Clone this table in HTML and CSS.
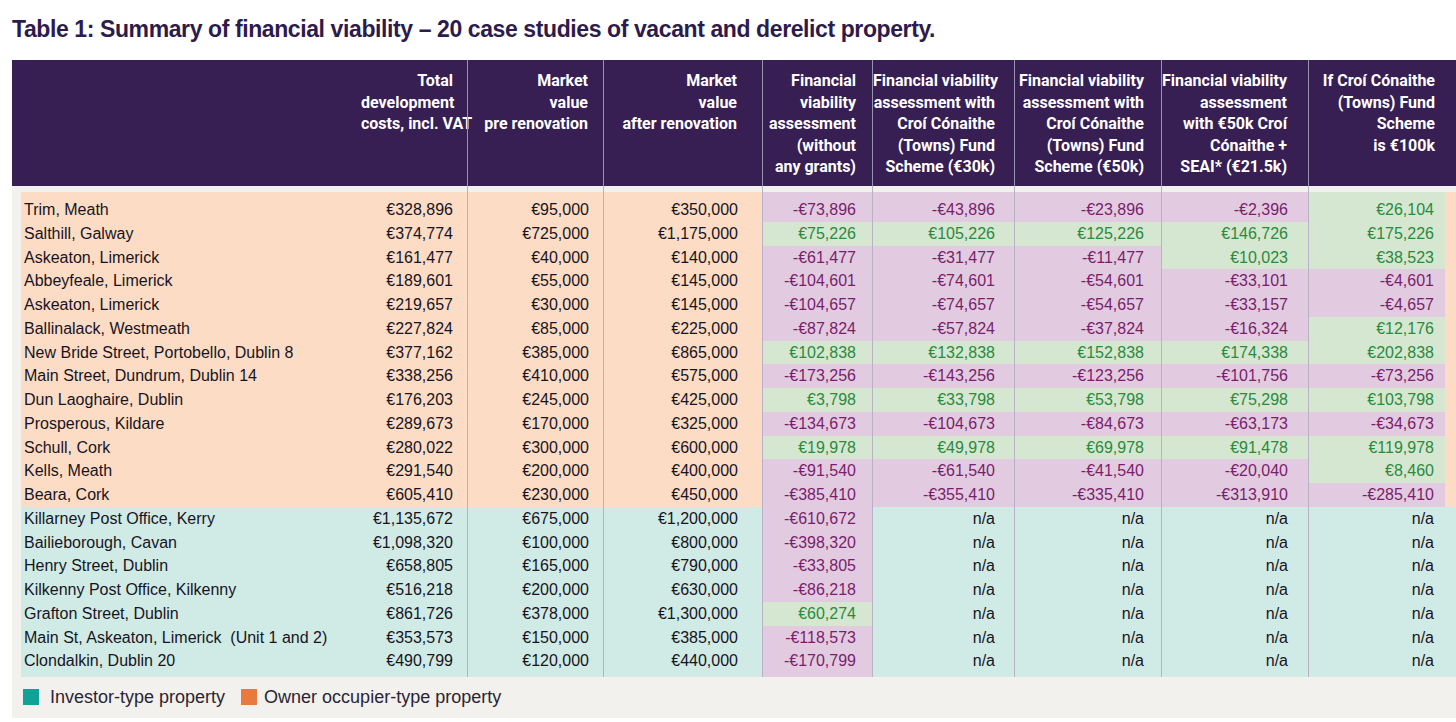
FILE: index.html
```html
<!DOCTYPE html>
<html lang="en">
<head>
<meta charset="utf-8">
<title>Table 1: Summary of financial viability</title>
<link rel="stylesheet" href="styles.css">
</head>
<body>
<h1 class="title">Table 1: Summary of financial viability – 20 case studies of vacant and derelict property.</h1>
<div class="panel">
  <div class="thead">
    <div class="th"></div>
    <div class="th">Total<br>development<br>costs, incl. VAT</div>
    <div class="th">Market<br>value<br>pre renovation</div>
    <div class="th">Market<br>value<br>after renovation</div>
    <div class="th">Financial<br>viability<br>assessment<br>(without<br>any grants)</div>
    <div class="th">Financial viability<br>assessment with<br>Croí Cónaithe<br>(Towns) Fund<br>Scheme (€30k)</div>
    <div class="th">Financial viability<br>assessment with<br>Croí Cónaithe<br>(Towns) Fund<br>Scheme (€50k)</div>
    <div class="th">Financial viability<br>assessment<br>with €50k Croí<br>Cónaithe +<br>SEAI* (€21.5k)</div>
    <div class="th">If Croí Cónaithe<br>(Towns) Fund<br>Scheme<br>is €100k</div>
  </div>
  <div class="tbody">
    <div class="spacer"><div></div><div></div><div></div><div></div><div></div><div></div><div></div><div></div><div></div></div>
    <div class="row own first"><div class="c lbl">Trim, Meath</div><div class="c">€328,896</div><div class="c">€95,000</div><div class="c">€350,000</div><div class="c neg">-€73,896</div><div class="c neg">-€43,896</div><div class="c neg">-€23,896</div><div class="c neg">-€2,396</div><div class="c pos">€26,104</div></div>
    <div class="row own"><div class="c lbl">Salthill, Galway</div><div class="c">€374,774</div><div class="c">€725,000</div><div class="c">€1,175,000</div><div class="c pos">€75,226</div><div class="c pos">€105,226</div><div class="c pos">€125,226</div><div class="c pos">€146,726</div><div class="c pos">€175,226</div></div>
    <div class="row own"><div class="c lbl">Askeaton, Limerick</div><div class="c">€161,477</div><div class="c">€40,000</div><div class="c">€140,000</div><div class="c neg">-€61,477</div><div class="c neg">-€31,477</div><div class="c neg">-€11,477</div><div class="c pos">€10,023</div><div class="c pos">€38,523</div></div>
    <div class="row own"><div class="c lbl">Abbeyfeale, Limerick</div><div class="c">€189,601</div><div class="c">€55,000</div><div class="c">€145,000</div><div class="c neg">-€104,601</div><div class="c neg">-€74,601</div><div class="c neg">-€54,601</div><div class="c neg">-€33,101</div><div class="c neg">-€4,601</div></div>
    <div class="row own"><div class="c lbl">Askeaton, Limerick</div><div class="c">€219,657</div><div class="c">€30,000</div><div class="c">€145,000</div><div class="c neg">-€104,657</div><div class="c neg">-€74,657</div><div class="c neg">-€54,657</div><div class="c neg">-€33,157</div><div class="c neg">-€4,657</div></div>
    <div class="row own"><div class="c lbl">Ballinalack, Westmeath</div><div class="c">€227,824</div><div class="c">€85,000</div><div class="c">€225,000</div><div class="c neg">-€87,824</div><div class="c neg">-€57,824</div><div class="c neg">-€37,824</div><div class="c neg">-€16,324</div><div class="c pos">€12,176</div></div>
    <div class="row own"><div class="c lbl">New Bride Street, Portobello, Dublin 8</div><div class="c">€377,162</div><div class="c">€385,000</div><div class="c">€865,000</div><div class="c pos">€102,838</div><div class="c pos">€132,838</div><div class="c pos">€152,838</div><div class="c pos">€174,338</div><div class="c pos">€202,838</div></div>
    <div class="row own"><div class="c lbl">Main Street, Dundrum, Dublin 14</div><div class="c">€338,256</div><div class="c">€410,000</div><div class="c">€575,000</div><div class="c neg">-€173,256</div><div class="c neg">-€143,256</div><div class="c neg">-€123,256</div><div class="c neg">-€101,756</div><div class="c neg">-€73,256</div></div>
    <div class="row own"><div class="c lbl">Dun Laoghaire, Dublin</div><div class="c">€176,203</div><div class="c">€245,000</div><div class="c">€425,000</div><div class="c pos">€3,798</div><div class="c pos">€33,798</div><div class="c pos">€53,798</div><div class="c pos">€75,298</div><div class="c pos">€103,798</div></div>
    <div class="row own"><div class="c lbl">Prosperous, Kildare</div><div class="c">€289,673</div><div class="c">€170,000</div><div class="c">€325,000</div><div class="c neg">-€134,673</div><div class="c neg">-€104,673</div><div class="c neg">-€84,673</div><div class="c neg">-€63,173</div><div class="c neg">-€34,673</div></div>
    <div class="row own"><div class="c lbl">Schull, Cork</div><div class="c">€280,022</div><div class="c">€300,000</div><div class="c">€600,000</div><div class="c pos">€19,978</div><div class="c pos">€49,978</div><div class="c pos">€69,978</div><div class="c pos">€91,478</div><div class="c pos">€119,978</div></div>
    <div class="row own"><div class="c lbl">Kells, Meath</div><div class="c">€291,540</div><div class="c">€200,000</div><div class="c">€400,000</div><div class="c neg">-€91,540</div><div class="c neg">-€61,540</div><div class="c neg">-€41,540</div><div class="c neg">-€20,040</div><div class="c pos">€8,460</div></div>
    <div class="row own"><div class="c lbl">Beara, Cork</div><div class="c">€605,410</div><div class="c">€230,000</div><div class="c">€450,000</div><div class="c neg">-€385,410</div><div class="c neg">-€355,410</div><div class="c neg">-€335,410</div><div class="c neg">-€313,910</div><div class="c neg">-€285,410</div></div>
    <div class="row inv"><div class="c lbl">Killarney Post Office, Kerry</div><div class="c">€1,135,672</div><div class="c">€675,000</div><div class="c">€1,200,000</div><div class="c neg">-€610,672</div><div class="c">n/a</div><div class="c">n/a</div><div class="c">n/a</div><div class="c">n/a</div></div>
    <div class="row inv"><div class="c lbl">Bailieborough, Cavan</div><div class="c">€1,098,320</div><div class="c">€100,000</div><div class="c">€800,000</div><div class="c neg">-€398,320</div><div class="c">n/a</div><div class="c">n/a</div><div class="c">n/a</div><div class="c">n/a</div></div>
    <div class="row inv"><div class="c lbl">Henry Street, Dublin</div><div class="c">€658,805</div><div class="c">€165,000</div><div class="c">€790,000</div><div class="c neg">-€33,805</div><div class="c">n/a</div><div class="c">n/a</div><div class="c">n/a</div><div class="c">n/a</div></div>
    <div class="row inv"><div class="c lbl">Kilkenny Post Office, Kilkenny</div><div class="c">€516,218</div><div class="c">€200,000</div><div class="c">€630,000</div><div class="c neg">-€86,218</div><div class="c">n/a</div><div class="c">n/a</div><div class="c">n/a</div><div class="c">n/a</div></div>
    <div class="row inv"><div class="c lbl">Grafton Street, Dublin</div><div class="c">€861,726</div><div class="c">€378,000</div><div class="c">€1,300,000</div><div class="c pos">€60,274</div><div class="c">n/a</div><div class="c">n/a</div><div class="c">n/a</div><div class="c">n/a</div></div>
    <div class="row inv"><div class="c lbl">Main St, Askeaton, Limerick&nbsp; (Unit 1 and 2)</div><div class="c">€353,573</div><div class="c">€150,000</div><div class="c">€385,000</div><div class="c neg">-€118,573</div><div class="c">n/a</div><div class="c">n/a</div><div class="c">n/a</div><div class="c">n/a</div></div>
    <div class="row inv last"><div class="c lbl">Clondalkin, Dublin 20</div><div class="c">€490,799</div><div class="c">€120,000</div><div class="c">€440,000</div><div class="c neg">-€170,799</div><div class="c">n/a</div><div class="c">n/a</div><div class="c">n/a</div><div class="c">n/a</div></div>
  </div>
  <div class="legend">
    <span class="sw sw-inv"></span><span class="lg-text lg-first">Investor-type property</span>
    <span class="sw sw-own"></span><span class="lg-text lg-second">Owner occupier-type property</span>
  </div>
</div>
</body>
</html>
```

FILE: styles.css
```css
* { box-sizing: border-box; }

body {
  margin: 0;
  background: #ffffff;
  font-family: "Liberation Sans", Arial, sans-serif;
  color: #17141f;
}

.title {
  margin: 14px 0 0 12px;
  font-size: 23px;
  line-height: 30px;
  font-weight: bold;
  letter-spacing: -0.4px;
  color: #2d1b4b;
  white-space: nowrap;
}

.panel {
  margin: 16px 0 0 12px;
  width: 1444px;
  height: 658px;
  background: #f2f1ed;
}

.thead {
  display: grid;
  grid-template-columns: 349px 106px 136px 159px 110px 142px 147px 147px 148px;
  height: 126px;
  background: #371e53;
  color: #ffffff;
  font-family: "Roboto", "Liberation Sans", sans-serif;
  font-weight: 700;
  font-size: 16px;
  line-height: 21.5px;
}

.th {
  padding-top: 10px;
  text-align: right;
  white-space: nowrap;
}

.th:nth-child(n+3) { border-left: 1px solid #9b92ae; }

.th:nth-child(2) { padding-right: 14px; }
.th:nth-child(3) { padding-right: 15px; }
.th:nth-child(4) { padding-right: 25px; }
.th:nth-child(5) { padding-right: 16px; }
.th:nth-child(6) { padding-right: 19px; }
.th:nth-child(7) { padding-right: 17px; }
.th:nth-child(8) { padding-right: 21px; }
.th:nth-child(9) { padding-right: 21px; }

.tbody {
  padding-left: 9px;
}

.row,
.spacer {
  display: grid;
  grid-template-columns: 340px 106px 136px 159px 110px 142px 147px 147px 137px;
}

.spacer { height: 6px; }
.spacer > div:nth-child(n+3) { border-left: 1px solid #b9b2c4; }

.row.own { background: #fcdcc5; }
.row.inv { background: #d0ebe5; }

.c {
  line-height: 23.75px;
  font-size: 16px;
  text-align: right;
  white-space: nowrap;
  color: #17141f;
}

.c:nth-child(n+3) { border-left: 1px solid #b9b2c4; }

.c.lbl { text-align: left; padding-left: 3px; }

.c:nth-child(2) { padding-right: 14px; }
.c:nth-child(3) { padding-right: 14px; }
.c:nth-child(4) { padding-right: 24px; }
.c:nth-child(5) { padding-right: 16px; }
.c:nth-child(6) { padding-right: 19px; }
.c:nth-child(7) { padding-right: 17px; }
.c:nth-child(8) { padding-right: 20px; }
.c:nth-child(9) { padding-right: 11px; }

.row.first .c { padding-top: 6px; }
.row.last .c { padding-bottom: 4px; }

.c.neg { background: #e2cbe0; color: #7a1e6c; }
.c.pos { background: #d5e7d0; color: #2b8a3e; }

.legend {
  display: flex;
  align-items: center;
  padding: 10px 0 0 11px;
  font-size: 18px;
  line-height: 20px;
  color: #2a2533;
}

.sw {
  display: inline-block;
  width: 16px;
  height: 16px;
}

.sw-inv { background: #0ea396; }
.sw-own { background: #e97a3f; }

.lg-first { margin-left: 11px; margin-right: 16px; }
.lg-second { margin-left: 7px; }
```
